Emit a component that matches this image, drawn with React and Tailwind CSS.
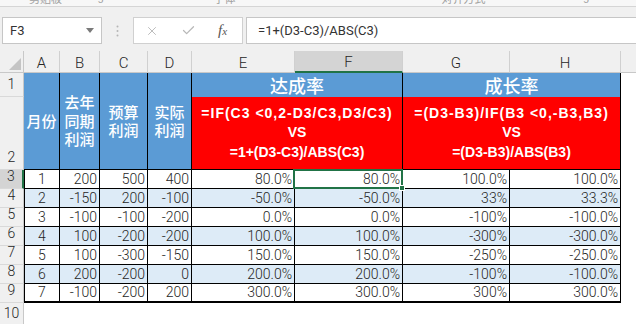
import React from "react";
import { X, Check } from "lucide-react";

const num = "font-['Roboto',sans-serif] font-light text-[14px] text-[#262626]";
const cjk = "font-['Noto_Sans_CJK_SC',sans-serif]";

const data = [
  ["1", "200", "500", "400", "80.0%", "80.0%", "100.0%", "100.0%"],
  ["2", "-150", "200", "-100", "-50.0%", "-50.0%", "33%", "33.3%"],
  ["3", "-100", "-100", "-200", "0.0%", "0.0%", "-100%", "-100.0%"],
  ["4", "100", "-200", "-200", "100.0%", "100.0%", "-300%", "-300.0%"],
  ["5", "100", "-300", "-150", "150.0%", "150.0%", "-250%", "-250.0%"],
  ["6", "200", "-200", "0", "200.0%", "200.0%", "-100%", "-100.0%"],
  ["7", "-100", "-200", "200", "300.0%", "300.0%", "300%", "300.0%"],
];

function RowHead({ n, active }) {
  return (
    <div
      className={`flex items-end justify-center pb-[1px] border-b border-[#d9d9d9] ${num} text-[#444] ${
        active ? "bg-[#d4d4d4] border-r-2 border-r-[#217346]" : "bg-[#f0f0f0] border-r border-r-[#c8c8c8]"
      }`}
    >
      {n}
    </div>
  );
}

function ColHead({ label, active }) {
  return (
    <div
      className={`flex items-center justify-center pt-[3px] border-r border-[#d0d0d0] ${num} text-[15px] text-[#444] ${
        active ? "bg-[#d4d4d4] border-b-2 border-b-[#217346]" : "bg-[#f0f0f0] border-b border-b-[#c8c8c8]"
      }`}
    >
      {label}
    </div>
  );
}

function BlueHead({ lines }) {
  return (
    <div
      className={`row-span-2 flex flex-col items-center justify-center bg-[#5b9bd5] border-r border-b border-black text-white text-[15px] leading-[18.5px] font-medium ${cjk}`}
    >
      {lines.map((l) => (
        <span key={l}>{l}</span>
      ))}
    </div>
  );
}

function DataRow({ row, idx }) {
  const stripe = idx % 2 === 1;
  const last = idx === data.length - 1;
  const base = `flex items-center border-r border-black ${last ? "border-b-2" : "border-b"} ${
    stripe ? "bg-[#ddebf7]" : "bg-white"
  } ${num}`;
  return (
    <>
      <RowHead n={idx + 3} active={idx === 0} />
      {row.map((v, i) => (
        <div
          key={i}
          className={`${base} ${i === 0 ? "justify-center border-l" : "justify-end pr-[2px]"} ${
            i === 5 && idx === 0 ? "relative" : ""
          }`}
        >
          {v}
          {i === 5 && idx === 0 && (
            <div className="absolute -left-[2px] -top-[1px] -right-[1px] -bottom-[1px] border-2 border-[#217346]">
              <div className="absolute -right-[4px] -bottom-[4px] w-[6px] h-[6px] bg-[#217346] border border-white" />
            </div>
          )}
        </div>
      ))}
      <div className="bg-white" />
    </>
  );
}

export default function App() {
  return (
    <div className="w-[636px] h-[324px] overflow-hidden bg-white flex flex-col">
      {/* ribbon edge, cut off */}
      <div className="h-[7px] shrink-0 bg-[#f7f7f7] border-b border-[#d5d5d5] overflow-hidden">
        <div className={`flex -mt-[10px] text-[11px] text-[#a0a0a0] ${cjk}`}>
          <span className="ml-[29px]">剪贴板</span>
          <span className="ml-[36px]">ↄ</span>
          <span className="ml-[110px]">字体</span>
          <span className="ml-[206px]">对齐方式</span>
          <span className="ml-[98px]">ↄ</span>
        </div>
      </div>

      {/* formula bar */}
      <div className="h-[44px] shrink-0 bg-[#f0f0f0] flex items-start pt-[10px] pl-[2px]">
        <div className="w-[100px] h-[27px] bg-white border border-[#c6c6c6] flex items-center pl-[7px] pr-[7px]">
          <span className="font-['Roboto',sans-serif] text-[13px] text-[#333]">F3</span>
          <svg className="ml-auto" width="8" height="5" viewBox="0 0 8 5">
            <path d="M0 0h8L4 5z" fill="#7a7a7a" />
          </svg>
        </div>
        <div className="w-[31px] h-[27px] flex items-center justify-center">
          <svg width="3" height="12" viewBox="0 0 3 12">
            <circle cx="1.5" cy="1.5" r="1" fill="#b5b5b5" />
            <circle cx="1.5" cy="6" r="1" fill="#b5b5b5" />
            <circle cx="1.5" cy="10.5" r="1" fill="#b5b5b5" />
          </svg>
        </div>
        <div className="w-[110px] h-[27px] bg-white border border-[#d0d0d0] flex items-center">
          <X className="ml-[11px]" size={14} strokeWidth={1.6} color="#b8b8b8" />
          <Check className="ml-[22px]" size={15} strokeWidth={2} color="#b8b8b8" />
          <span className="ml-[22px] font-['Liberation_Serif',serif] italic text-[15px] text-[#555]">
            f<span className="text-[11px]">x</span>
          </span>
        </div>
        <div className="ml-[3px] flex-1 h-[27px] bg-white border border-r-0 border-[#c6c6c6] flex items-center pl-[11px]">
          <span className="font-['Roboto',sans-serif] text-[13px] text-[#333]">=1+(D3-C3)/ABS(C3)</span>
        </div>
      </div>

      {/* sheet */}
      <div className="flex-1 grid grid-cols-[24px_36px_40px_48px_44px_103px_108px_107px_111px_1fr] grid-rows-[22px_24px_73px_repeat(7,19px)_1fr]">
        <div className="bg-[#f0f0f0] border-r border-b border-[#c8c8c8] flex items-end justify-end p-[2px]">
          <svg width="12" height="12" viewBox="0 0 12 12">
            <path d="M12 0V12H0z" fill="#c4c4c4" />
          </svg>
        </div>
        {["A", "B", "C", "D", "E", "F", "G", "H"].map((c) => (
          <ColHead key={c} label={c} active={c === "F"} />
        ))}
        <div className="bg-[#f0f0f0] border-b border-[#c8c8c8]" />

        {/* row 1 */}
        <RowHead n={1} />
        <BlueHead lines={["月份"]} />
        <BlueHead lines={["去年", "同期", "利润"]} />
        <BlueHead lines={["预算", "利润"]} />
        <BlueHead lines={["实际", "利润"]} />
        <div className={`col-span-2 bg-[#5b9bd5] border-r border-black flex items-center justify-center text-white text-[18px] font-medium ${cjk}`}>
          达成率
        </div>
        <div className={`col-span-2 bg-[#5b9bd5] border-r border-black flex items-center justify-center text-white text-[18px] font-medium ${cjk}`}>
          成长率
        </div>
        <div className="bg-white" />

        {/* row 2 */}
        <RowHead n={2} />
        <div className="col-span-2 bg-[#ff0000] border-r border-b border-black flex flex-col items-center justify-center text-white font-bold text-[14px] leading-[19.5px] font-['Liberation_Sans',sans-serif]">
          <span className="tracking-[1px]">=IF(C3 &lt;0,2-D3/C3,D3/C3)</span>
          <span>VS</span>
          <span>=1+(D3-C3)/ABS(C3)</span>
        </div>
        <div className="col-span-2 bg-[#ff0000] border-r border-b border-black flex flex-col items-center justify-center text-white font-bold text-[14px] leading-[19.5px] font-['Liberation_Sans',sans-serif]">
          <span className="tracking-[1px]">=(D3-B3)/IF(B3 &lt;0,-B3,B3)</span>
          <span>VS</span>
          <span>=(D3-B3)/ABS(B3)</span>
        </div>
        <div className="bg-white" />

        {data.map((r, i) => (
          <DataRow key={i} row={r} idx={i} />
        ))}

        {/* row 10 */}
        <RowHead n={10} />
        <div className="col-span-9 bg-white" />
      </div>
    </div>
  );
}
